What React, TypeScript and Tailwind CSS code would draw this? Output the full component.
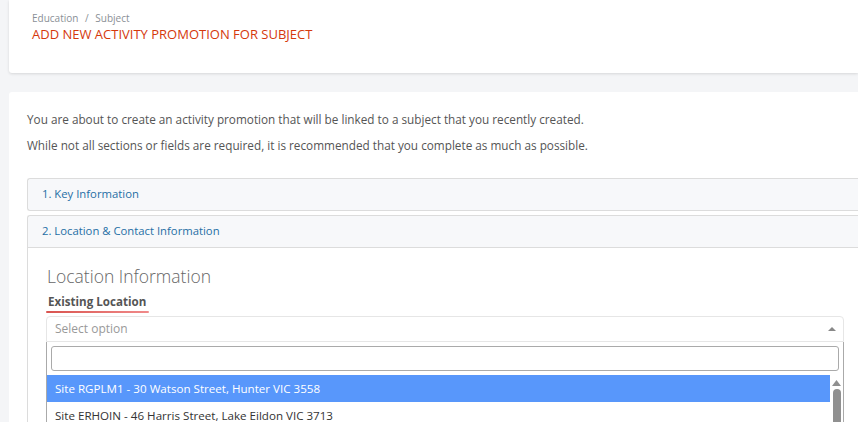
import React from "react";

const font = { fontFamily: '"Open Sans", "Liberation Sans", sans-serif' };

const options = [
  "Site RGPLM1 - 30 Watson Street, Hunter VIC 3558",
  "Site ERHOIN - 46 Harris Street, Lake Eildon VIC 3713",
  "Site KQWPLA - 12 Station Road, Ballarat VIC 3350",
];

const AccordionHeader: React.FC<{ label: string; open?: boolean }> = ({ label, open }) => (
  <div
    className={`h-[33px] flex items-center pl-[14px] bg-[#f7f8fa] border border-[#dcdcdc] border-r-0 text-[11.3px] text-[#1f6fa5] ${
      open ? "rounded-tl-[3px]" : "rounded-l-[3px]"
    }`}
  >
    {label}
  </div>
);

export default function App() {
  return (
    <div className="w-[858px] h-[422px] overflow-hidden bg-[#f4f5f7] pl-[9px]" style={font}>
      {/* page header */}
      <div className="h-[73px] bg-white rounded-bl-[3px] shadow-[0_1px_3px_rgba(0,0,0,0.12)] pl-[23px] pt-[11px]">
        <div className="text-[10px] text-[#8a8f96] leading-[14px]">
          Education <span className="mx-[4px]">/</span> Subject
        </div>
        <h1 className="text-[13px] leading-[18px] text-[#d5380c] font-normal uppercase">
          Add new activity promotion for subject
        </h1>
      </div>

      {/* main card */}
      <div className="mt-[19px] bg-white rounded-tl-[3px] pl-[18px] pt-[18px] h-[340px]">
        <p className="text-[11.75px] leading-[18px] text-[#555]">
          You are about to create an activity promotion that will be linked to a subject that you recently created.
        </p>
        <p className="mt-[8px] text-[11.75px] leading-[18px] text-[#555]">
          While not all sections or fields are required, it is recommended that you complete as much as possible.
        </p>

        <div className="mt-[24px] flex flex-col gap-[4px]">
          <AccordionHeader label="1. Key Information" />
          <div>
            <AccordionHeader label="2. Location & Contact Information" open />
            <div className="border-l border-[#dcdcdc] pl-[19px] pt-[16px] h-[200px]">
              <h2 className="text-[17.5px] leading-[24px] font-light text-[#666]">Location Information</h2>
              <div className="mt-[6px] inline-block">
                <div className="text-[11.6px] font-bold leading-[16px] text-[#555] px-[1px]">Existing Location</div>
                <div className="h-[2px] w-[103px] -ml-[1px] mt-[1px] bg-gradient-to-r from-[#d9534f] to-[#f08a8a] rounded-full" />
              </div>

              {/* select */}
              <div className="w-[798px] -ml-[1px] mt-[3px]">
                <div className="h-[26px] border border-[#e6e6e6] rounded-t-[4px] flex items-center justify-between pl-[8px] pr-[6px]">
                  <span className="text-[12px] text-[#999]">Select option</span>
                  <svg width="8" height="6" viewBox="0 0 8 6" className="mr-[1px]">
                    <path d="M0 5 L4 1 L8 5 Z" fill="#888" />
                  </svg>
                </div>
                <div className="border-x border-[#aaa] bg-white">
                  <div className="px-[4px] pt-[4px] pb-[4px]">
                    <div className="h-[25px] border border-[#aaa] rounded-[3px]" />
                  </div>
                  <div className="flex">
                    <div className="flex-1">
                      {options.map((o, i) => (
                        <div
                          key={o}
                          className={`h-[27px] flex items-center pl-[8px] text-[11.6px] ${
                            i === 0 ? "bg-[#5897fb] text-white" : "text-[#333]"
                          }`}
                        >
                          {o}
                        </div>
                      ))}
                    </div>
                    <div className="w-[13px] flex flex-col items-center pt-[5px]">
                      <svg width="9" height="6" viewBox="0 0 9 6">
                        <path d="M0 6 L4.5 0 L9 6 Z" fill="#909090" />
                      </svg>
                      <div className="mt-[3px] w-[8px] h-[60px] rounded-full bg-[#909090]" />
                    </div>
                  </div>
                </div>
              </div>
            </div>
          </div>
        </div>
      </div>
    </div>
  );
}
